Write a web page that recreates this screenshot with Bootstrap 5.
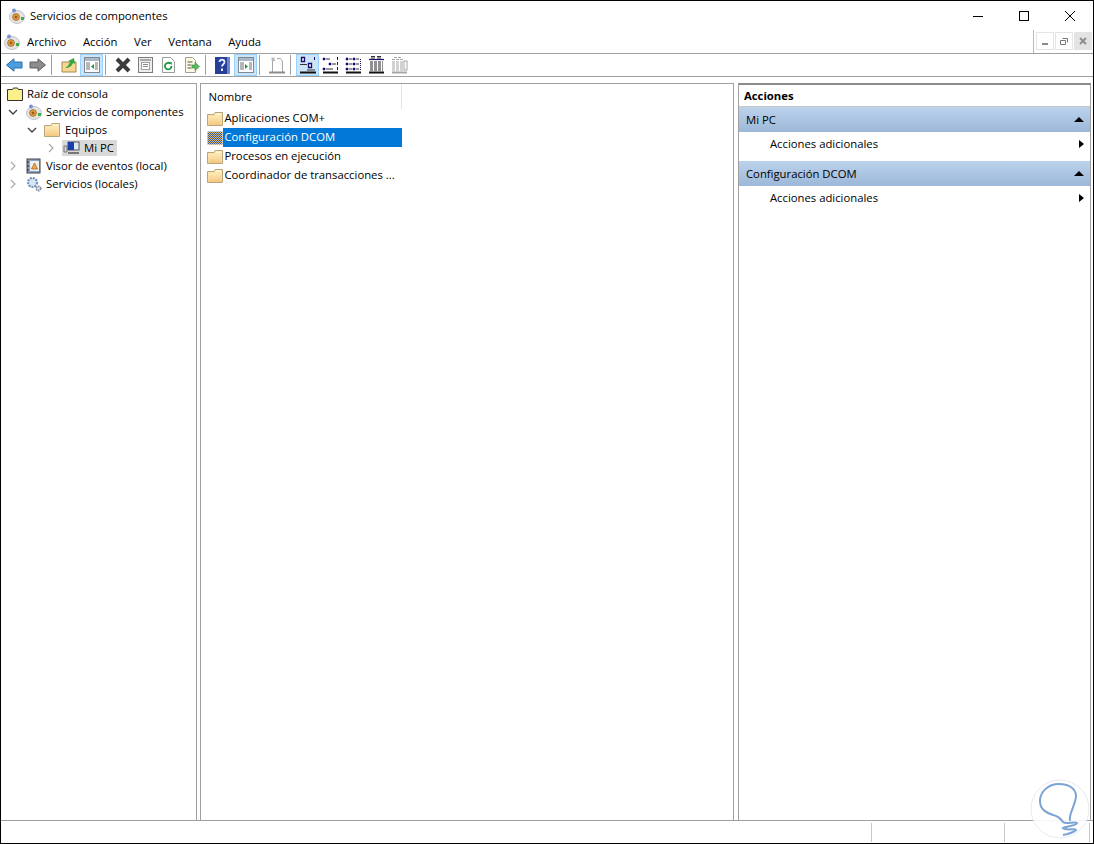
<!DOCTYPE html>
<html lang="es">
<head>
  <meta charset="UTF-8">
  <title>Servicios de componentes</title>
  <link href="https://cdn.jsdelivr.net/npm/bootstrap@5.3.2/dist/css/bootstrap.min.css" rel="stylesheet">
  <style>
    html, body { height: 100%; overflow: hidden; }
    body {
      background: #fff;
      color: #000;
      font-family: "Open Sans", "Liberation Sans", sans-serif;
      font-size: 11.3px;
      line-height: 16px;
    }
    .win { width: 1094px; height: 844px; border: 1px solid #000; position: relative; }
    .title-bar { height: 29px; padding-left: 8px; }
    .title-bar .ttl { margin-left: 5px; }
    .win-btn { width: 46px; height: 29px; }
    .menu-bar { height: 24px; border-bottom: 1px solid #a0a0a0; padding-left: 3px; }
    .menu-bar .mitem { margin-right: 16.500px; }
    .menu-icon { margin-right: 7px; }
    .mdi { margin-left: auto; margin-right: 1px; height: 23px; border-left: 1px solid #b8b8b8; padding: 2px 0 0 2px; gap: 1px; }
    .mdi-btn { width: 18px; height: 18px; border: 1px solid #e4e4e4; }
    .mdi-btn.last { background: #e3e3e3; border-color: #e3e3e3; }
    .tool-bar { height: 23px; border-bottom: 1px solid #a0a0a0; padding-left: 2px; }
    .tbtn { width: 23px; height: 22px; border: 1px solid transparent; }
    .tbtn.on { background: #cce4f7; border-color: #99d1ff; }
    .tsep { width: 8px; height: 22px; padding-left: 2px; }
    .tsep i { display: block; width: 1px; height: 20px; margin-top: 1px; background: #a0a0a0; }
    .work { height: 743px; padding: 6px 2px 0 0; gap: 3px; }
    .pane { border: 1px solid #a0a0a0; border-bottom: 0; background: #fff; }
    .pane-tree { width: 197px; border-left: 0; padding-top: 1px; }
    .pane-list { width: 535px; }
    .pane-act { width: 354px; margin-left: 1px; border-top: 2px solid #8c8c8c; }
    .tree-row { height: 18px; white-space: nowrap; }
    .chev { width: 10px; height: 10px; flex: none; }
    .sel-gray { background: #d9d9d9; margin-left: 6px; padding: 0 3px 0 1px; }
    .lvl0 { padding-left: 6px; }
    .lvl1 { padding-left: 7px; }
    .lvl2 { padding-left: 26px; }
    .lvl3 { padding-left: 45px; }
    .gap-ic { margin: 0 4px 0 8px; flex: none; }
    .lvl2 .gap-ic { margin: 0 5px 0 7px; }
    .list-head { height: 25px; width: 201px; border-right: 1px solid #e5e5e5; padding-left: 7px; }
    .list-row { height: 19px; padding-left: 6px; }
    .list-txt { padding-left: 1px; width: 179px; height: 19px; line-height: 18px; white-space: nowrap; overflow: hidden; }
    .list-txt.picked { background: #0078d7; color: #fff; }
    .act-title { height: 22px; padding-left: 5px; font-weight: 700; border-bottom: 1px solid #c8c8c8; }
    .act-sec { height: 25px; padding: 0 6px 0 7px; background: linear-gradient(#bcd3ec, #9cb7d8); }
    .act-item { height: 24px; padding: 0 6px 0 31px; }
    .act-gap { height: 5px; }
    .tri-up { width: 0; height: 0; border: 5px solid transparent; border-top: 0; border-bottom: 5px solid #000; }
    .tri-right { width: 0; height: 0; border: 4px solid transparent; border-right: 0; border-left: 5px solid #000; }
    .status-bar { height: 22px; border-top: 1px solid #a0a0a0; padding-top: 2px; }
    .st-cell { height: 19px; border-right: 1px solid #c8c8c8; }
    .st-a { width: 871px; }
    .st-b { width: 133px; }
    .st-c { width: 85px; }
    .wmark { position: absolute; left: 1029px; top: 778px; width: 60px; height: 60px; }
  </style>
</head>
<body>

<svg width="0" height="0" class="position-absolute">
  <defs>
    <symbol id="i-comp" viewBox="0 0 16 16">
      <ellipse cx="8" cy="9" rx="7.500" ry="6.500" fill="#e4e4e6" stroke="#c4c4c8"/>
      <circle cx="7" cy="9" r="3.400" fill="#e8a33c" stroke="#8a5a20" stroke-width=".7"/>
      <path d="M5.500 9h3M7 7.500v3" stroke="#7a3c10" stroke-width=".9"/>
      <circle cx="5" cy="2.500" r="2" fill="#7c8fd0"/>
      <rect x="12" y="9" width="3" height="3" fill="#3fae4a"/>
    </symbol>
    <symbol id="i-folder" viewBox="0 0 16 16">
      <path d="M.5 3.500V14.500H15.500V1.500H8L7 3.500Z" fill="#fbe3a8" stroke="#b9a57c"/>
      <path d="M1.500 5h13v9h-13z" fill="url(#fg)"/>
      <path d="M8.500 2.500h6v1.500h-6z" fill="#fff6d8"/>
    </symbol>
    <linearGradient id="fg" x1="0" y1="0" x2="0" y2="1"><stop offset="0" stop-color="#fde9b5"/><stop offset="1" stop-color="#f4c77e"/></linearGradient>
    <pattern id="dith" width="2" height="2" patternUnits="userSpaceOnUse">
      <rect width="2" height="2" fill="#d9b66a"/><rect width="1" height="1" fill="#3d5f9e"/><rect x="1" y="1" width="1" height="1" fill="#3d5f9e"/>
    </pattern>
    <symbol id="i-chev-r" viewBox="0 0 10 10"><path d="M3 1l4 4-4 4" fill="none" stroke="#a6a6a6" stroke-width="1.100"/></symbol>
    <symbol id="i-chev-d" viewBox="0 0 10 10"><path d="M1 3l4 4 4-4" fill="none" stroke="#404040" stroke-width="1.300"/></symbol>
    <symbol id="i-win" viewBox="0 0 16 16">
      <rect x=".5" y=".5" width="15" height="15" fill="#fff" stroke="#7d8a96"/>
      <rect x="1" y="1" width="14" height="3" fill="#a9b8c6"/>
      <path d="M2 6h4M2 8h4M2 10h4M2 12h4M11 6h3M11 8h3M11 10h3M11 12h3" stroke="#6e6e6e" stroke-width="1"/>
    </symbol>
  </defs>
</svg>

<div class="win">

  <div class="title-bar d-flex align-items-center">
    <svg width="16" height="16"><use href="#i-comp"/></svg>
    <span class="ttl">Servicios de componentes</span>
    <div class="ms-auto d-flex">
      <div class="win-btn d-flex align-items-center justify-content-center"><svg width="12" height="12"><path d="M1 6.500h10" stroke="#000"/></svg></div>
      <div class="win-btn d-flex align-items-center justify-content-center"><svg width="12" height="12"><rect x="1.500" y="1.500" width="9" height="9" fill="none" stroke="#000"/></svg></div>
      <div class="win-btn d-flex align-items-center justify-content-center"><svg width="12" height="12"><path d="M1 1l10 10M11 1L1 11" stroke="#000" fill="none"/></svg></div>
    </div>
  </div>

  <div class="menu-bar d-flex align-items-center">
    <svg class="menu-icon" width="16" height="16"><use href="#i-comp"/></svg>
    <span class="mitem">Archivo</span>
    <span class="mitem">Acción</span>
    <span class="mitem">Ver</span>
    <span class="mitem">Ventana</span>
    <span class="mitem">Ayuda</span>
    <div class="mdi d-flex">
      <div class="mdi-btn d-flex align-items-center justify-content-center"><svg width="10" height="10"><path d="M2 8h6" stroke="#8a8a8a" stroke-width="2"/></svg></div>
      <div class="mdi-btn d-flex align-items-center justify-content-center"><svg width="10" height="10"><path d="M3.500 2.500h5v4M1.500 4.500h5v4h-5z" fill="none" stroke="#777"/></svg></div>
      <div class="mdi-btn last d-flex align-items-center justify-content-center"><svg width="10" height="10"><path d="M2 2l6 6M8 2l-6 6" stroke="#8e8e8e" stroke-width="2"/></svg></div>
    </div>
  </div>

  <div class="tool-bar d-flex">
    <div class="tbtn d-flex align-items-center justify-content-center"><svg width="17" height="14" viewBox="0 0 17 14"><path d="M.5 7L8 .8V4h8v6H8v3.200z" fill="#4a9ee0" stroke="#2d6fa8"/></svg></div>
    <div class="tbtn d-flex align-items-center justify-content-center"><svg width="17" height="14" viewBox="0 0 17 14"><path d="M16.500 7L9 .8V4H1v6h8v3.200z" fill="#8c8c8c" stroke="#5f5f5f"/></svg></div>
    <div class="tsep"><i></i></div>
    <div class="tbtn d-flex align-items-center justify-content-center"><svg width="16" height="16" viewBox="0 0 16 16"><path d="M1 5h14v10H1z" fill="#f8d590" stroke="#a88a50"/><path d="M4 11c2-1 4-3 5-6L7 4l6-3 1 6-2-1c-1 3-4 5-8 5z" fill="#3aa544"/></svg></div>
    <div class="tbtn on d-flex align-items-center justify-content-center"><svg width="16" height="16" viewBox="0 0 16 16"><use href="#i-win"/><rect x="7" y="5" width="3" height="9" fill="#fff"/><path d="M10 7v5L7 9.500z" fill="#1e9a3c"/></svg></div>
    <div class="tsep"><i></i></div>
    <div class="tbtn d-flex align-items-center justify-content-center"><svg width="18" height="16" viewBox="0 0 18 16"><path d="M3 2l12 12M15 2L3 14" stroke="#3c3c3c" stroke-width="4"/></svg></div>
    <div class="tbtn d-flex align-items-center justify-content-center"><svg width="15" height="16" viewBox="0 0 15 16"><rect x=".5" y=".5" width="14" height="15" fill="#eeeeee" stroke="#7c7c7c"/><rect x="2" y="2" width="11" height="2" fill="#a8a8a8"/><rect x="3.500" y="5.500" width="8" height="7" fill="#fff" stroke="#a0a0a0"/><path d="M5 7.500h5M5 9.500h5" stroke="#888"/></svg></div>
    <div class="tbtn d-flex align-items-center justify-content-center"><svg width="15" height="16" viewBox="0 0 15 16"><path d="M1.500.5h8l4 4v11h-12z" fill="#fff" stroke="#9c9c9c"/><path d="M10.500 9a3.300 3.300 0 1 1-1-2.300" fill="none" stroke="#1f9a3e" stroke-width="1.800"/><path d="M8 5l3 .2-.5 3z" fill="#1f9a3e"/></svg></div>
    <div class="tbtn d-flex align-items-center justify-content-center"><svg width="16" height="16" viewBox="0 0 16 16"><path d="M1.500.5h7l3 3v12h-10z" fill="#fdf8e0" stroke="#a0a090"/><path d="M3.500 5h5M3.500 8h4M3.500 11h4" stroke="#555"/><path d="M8 8h3V5.500L15.500 9.500 11 13.500V11H8z" fill="#5cb85c" stroke="#2f8f3f" stroke-width=".6"/></svg></div>
    <div class="tsep"><i></i></div>
    <div class="tbtn d-flex align-items-center justify-content-center"><svg width="15" height="17" viewBox="0 0 15 17"><rect width="15" height="17" fill="#26409a"/><rect x="12" width="3" height="17" fill="#6f86c8"/><path d="M4.500 5c0-3 5-3 5 0 0 2-2.500 2.500-2.500 4.500" fill="none" stroke="#e8ecff" stroke-width="1.800"/><rect x="6" y="11.500" width="2" height="2.500" fill="#e8ecff"/></svg></div>
    <div class="tbtn on d-flex align-items-center justify-content-center"><svg width="16" height="16" viewBox="0 0 16 16"><use href="#i-win"/><rect x="7" y="5" width="3" height="9" fill="#fff"/><path d="M7 7v5l3-2.500z" fill="#1e9a3c"/></svg></div>
    <div class="tsep"><i></i></div>
    <div class="tbtn d-flex align-items-center justify-content-center"><svg width="16" height="18" viewBox="0 0 16 18"><path d="M3.500 16V4.500H6M8 2.500h3.500l2 2.500v11" fill="#fafafa" stroke="#a8a8a8"/><path d="M4 1v4M2 3h4M2.500 1.500l3 3M5.500 1.500l-3 3" stroke="#b4b4b4" stroke-width=".8"/><path d="M0 16.500h16" stroke="#8c8c8c" stroke-width="2"/></svg></div>
    <div class="tsep"><i></i></div>
    <div class="tbtn on d-flex align-items-center justify-content-center"><svg width="17" height="18" viewBox="0 0 17 18"><path d="M2.500 1.500h3v4h-3zM9.500 7.500h3v4h-3z" fill="#fff" stroke="#1a0a6e" stroke-width="1.300"/><path d="M15.500 1v3" stroke="#1a0a6e"/><path d="M1 8.500h7M8 14h8" stroke="#333"/><path d="M1 16.500h16" stroke="#111" stroke-width="2"/></svg></div>
    <div class="tbtn d-flex align-items-center justify-content-center"><svg width="17" height="18" viewBox="0 0 17 18"><path d="M1 2h2v2H1zM7 7h2v2H7zM1 12h2v2H1z" fill="#1a0a6e" stroke="#1a0a6e" stroke-width=".5"/><path d="M15.500 1v3M15.500 6v3M15.500 11v3" stroke="#1a0a6e"/><path d="M4 3h4M10 8h4M4 13h7" stroke="#333"/><path d="M1 16.500h15" stroke="#111" stroke-width="2"/></svg></div>
    <div class="tbtn d-flex align-items-center justify-content-center"><svg width="17" height="18" viewBox="0 0 17 18"><path d="M1 2h2v2H1zM1 7h2v2H1zM1 12h2v2H1zM8 2h2v2H8zM8 7h2v2H8zM8 12h2v2H8z" fill="#1a0a6e" stroke="#1a0a6e" stroke-width=".5"/><path d="M4 3h3M4 8h3M4 13h3M11 3h3M11 8h3M11 13h3" stroke="#333"/><path d="M15.500 3v11" stroke="#1a0a6e" stroke-dasharray="1 1"/><path d="M1 16.500h15" stroke="#111" stroke-width="2"/></svg></div>
    <div class="tbtn d-flex align-items-center justify-content-center"><svg width="17" height="18" viewBox="0 0 17 18"><path d="M3 .500h4M9 .500h4M3 2h4M9 2h4" stroke="#333"/><path d="M1 3.500h15" stroke="#1a0a6e" stroke-width="1.200"/><path d="M2 6h13M2 8h13M2 10h13M2 12h13M2 14h13" stroke="#222" stroke-dasharray="3 1"/><path d="M1 16.500h15" stroke="#111" stroke-width="2"/></svg></div>
    <div class="tbtn d-flex align-items-center justify-content-center"><svg width="17" height="18" viewBox="0 0 17 18"><path d="M3 1.500h8M1 3.500h11M1 6h11M1 8h11M1 10h11M1 12h11M1 14h11" stroke="#a6a6a6" stroke-dasharray="3 1"/><rect x="13" y="5" width="3" height="9" fill="#fff" stroke="#a6a6a6"/><path d="M1 16.500h15" stroke="#a6a6a6" stroke-width="2"/></svg></div>
  </div>

  <div class="work d-flex">
    <div class="pane pane-tree">
      <div class="tree-row lvl0 d-flex align-items-center">
        <svg width="16" height="14" viewBox="0 0 16 14"><path d="M.5 2.500h5l1-1.500h4l1 1.500h4v11H.5z" fill="#fbf089" stroke="#333"/></svg>
        <span class="ms-1">Raíz de consola</span>
      </div>
      <div class="tree-row lvl1 d-flex align-items-center">
        <svg class="chev" width="10" height="10"><use href="#i-chev-d"/></svg>
        <svg class="gap-ic" width="16" height="16"><use href="#i-comp"/></svg>
        <span>Servicios de componentes</span>
      </div>
      <div class="tree-row lvl2 d-flex align-items-center">
        <svg class="chev" width="10" height="10"><use href="#i-chev-d"/></svg>
        <svg class="gap-ic" width="16" height="16"><use href="#i-folder"/></svg>
        <span>Equipos</span>
      </div>
      <div class="tree-row lvl3 d-flex align-items-center">
        <svg class="chev" width="10" height="10"><use href="#i-chev-r"/></svg>
        <div class="sel-gray d-flex align-items-center">
          <svg width="17" height="16" viewBox="0 0 17 16"><path d="M1 6v6h3V6z" fill="none" stroke="#777"/><rect x="5" y="2" width="11" height="8" fill="#dfe8f5" stroke="#555"/><path d="M5 2h6v8H5z" fill="#1a3fa8"/><path d="M5 13h11" stroke="#777" stroke-width="2"/></svg>
          <span class="ms-1">Mi PC</span>
        </div>
      </div>
      <div class="tree-row lvl1 d-flex align-items-center">
        <svg class="chev" width="10" height="10"><use href="#i-chev-r"/></svg>
        <svg class="gap-ic" width="16" height="16" viewBox="0 0 16 16"><rect x="1" y="1" width="13" height="14" fill="#8aa3c8" stroke="#444"/><rect x="4" y="3" width="9" height="10" fill="#eee"/><path d="M8.500 5l3 6h-6z" fill="#e8b23a" stroke="#a23a20" stroke-width=".6"/><path d="M1 4h2M1 8h2M1 12h2" stroke="#222"/></svg>
        <span>Visor de eventos (local)</span>
      </div>
      <div class="tree-row lvl1 d-flex align-items-center">
        <svg class="chev" width="10" height="10"><use href="#i-chev-r"/></svg>
        <svg class="gap-ic" width="16" height="16" viewBox="0 0 16 16"><circle cx="6.500" cy="6.500" r="4.500" fill="#d6e6f6" stroke="#6f8fb5" stroke-width="2" stroke-dasharray="2 1"/><circle cx="12.500" cy="12.500" r="2.300" fill="#d8d8d8" stroke="#7f8f9f" stroke-width="1.500" stroke-dasharray="1.500 .8"/></svg>
        <span>Servicios (locales)</span>
      </div>
    </div>

    <div class="pane pane-list">
      <div class="list-head d-flex align-items-center">Nombre</div>
      <div class="list-row d-flex align-items-center">
        <svg width="16" height="16"><use href="#i-folder"/></svg>
        <div class="list-txt">Aplicaciones COM+</div>
      </div>
      <div class="list-row d-flex align-items-center">
        <svg width="16" height="16" viewBox="0 0 16 16"><path d="M.5 1.500h15v13H.5z" fill="url(#dith)"/></svg>
        <div class="list-txt picked">Configuración DCOM</div>
      </div>
      <div class="list-row d-flex align-items-center">
        <svg width="16" height="16"><use href="#i-folder"/></svg>
        <div class="list-txt">Procesos en ejecución</div>
      </div>
      <div class="list-row d-flex align-items-center">
        <svg width="16" height="16"><use href="#i-folder"/></svg>
        <div class="list-txt">Coordinador de transacciones ...</div>
      </div>
    </div>

    <div class="pane pane-act">
      <div class="act-title d-flex align-items-center">Acciones</div>
      <div class="act-sec d-flex align-items-center justify-content-between">
        <span>Mi PC</span><span class="tri-up"></span>
      </div>
      <div class="act-item d-flex align-items-center justify-content-between">
        <span>Acciones adicionales</span><span class="tri-right"></span>
      </div>
      <div class="act-gap"></div>
      <div class="act-sec d-flex align-items-center justify-content-between">
        <span>Configuración DCOM</span><span class="tri-up"></span>
      </div>
      <div class="act-item d-flex align-items-center justify-content-between">
        <span>Acciones adicionales</span><span class="tri-right"></span>
      </div>
    </div>
  </div>

  <div class="status-bar d-flex">
    <div class="st-cell st-a"></div>
    <div class="st-cell st-b"></div>
    <div class="st-cell st-c"></div>
  </div>

  <svg class="wmark" viewBox="0 0 60 60">
    <circle cx="30" cy="30" r="29" fill="#fff" fill-opacity=".9" stroke="#e6eaf0"/>
    <path d="M40 42C38 36 46 25 46 17C46 9 38 5 29 5C18 5 10 13 10 22C10 31 17 34 23 36C28 37 31 40 33 43C36 46 44 42 47 44C47 47 36 47 33 49C36 52 45 49 46 51C44 53 38 55 33 56" fill="none" stroke="#7ba3d6" stroke-width="2"/>
  </svg>
</div>

<script src="https://cdn.jsdelivr.net/npm/bootstrap@5.3.2/dist/js/bootstrap.bundle.min.js"></script>
</body>
</html>
